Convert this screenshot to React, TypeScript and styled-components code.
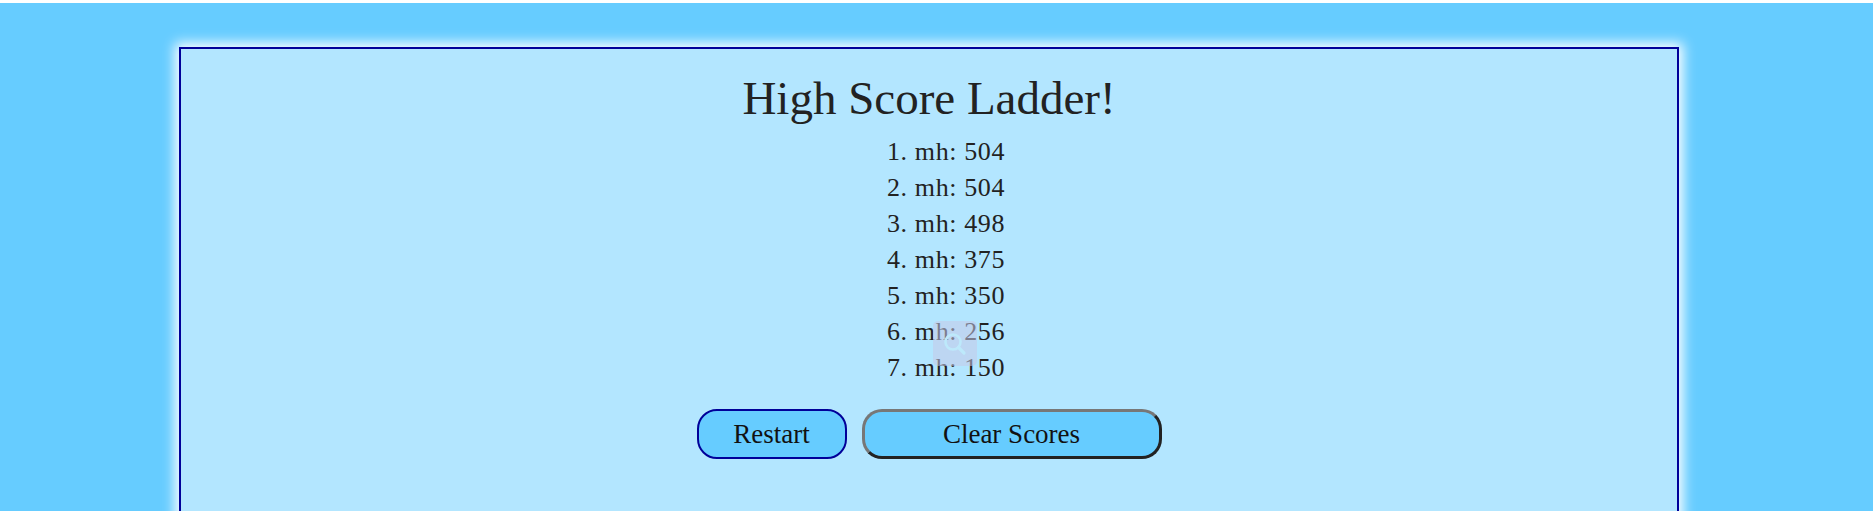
import React from "react";
import styled, { createGlobalStyle } from "styled-components";

const scores = [
  { name: "mh", score: 504 },
  { name: "mh", score: 504 },
  { name: "mh", score: 498 },
  { name: "mh", score: 375 },
  { name: "mh", score: 350 },
  { name: "mh", score: 256 },
  { name: "mh", score: 150 },
];

const App = () => {
  return (
    <>
      <GlobalStyle />
      <Page>
        <Panel>
          <Title>High Score Ladder!</Title>
          <Ladder>
            {scores.map((s, i) => (
              <Entry key={i}>
                {i + 1}. {s.name}: {s.score}
              </Entry>
            ))}
            <ZoomHint aria-hidden>
              <svg width="30" height="30" viewBox="0 0 30 30" fill="none">
                <circle cx="13" cy="13" r="7.5" stroke="#bde9fb" strokeWidth="2.6" />
                <path d="M18.5 18.5 L24 24" stroke="#bde9fb" strokeWidth="3.2" strokeLinecap="round" />
              </svg>
            </ZoomHint>
          </Ladder>
          <ButtonRow>
            <RestartButton type="button">Restart</RestartButton>
            <ClearButton type="button">Clear Scores</ClearButton>
          </ButtonRow>
        </Panel>
      </Page>
    </>
  );
};

// --- Styled Components ---

const GlobalStyle = createGlobalStyle`
  html, body {
    margin: 0;
    padding: 0;
    background: #ffffff;
  }
  body {
    padding-top: 3px;
    font-family: "Liberation Serif", "DejaVu Serif", serif;
    overflow: hidden;
  }
`;

const Page = styled.div`
  background-color: #66ccff;
  min-height: 508px;
  padding-top: 44px;
  box-sizing: border-box;
`;

const Panel = styled.div`
  box-sizing: border-box;
  width: 1500px;
  margin-left: 179px;
  min-height: 520px;
  background-color: #b3e6ff;
  border: 2px solid #000099;
  box-shadow: 0 0 12px 4px #ffffff;
  display: flex;
  flex-direction: column;
  align-items: center;
  padding-top: 21px;
`;

const Title = styled.h1`
  margin: 0;
  font-size: 47px;
  font-weight: 400;
  line-height: 56px;
  color: #222222;
`;

const Ladder = styled.ol`
  position: relative;
  list-style: none;
  margin: 8px 0 0;
  padding: 0 0 0 34px;
  display: flex;
  flex-direction: column;
  align-items: center;
`;

const Entry = styled.li`
  font-size: 26px;
  line-height: 36px;
  letter-spacing: 0.6px;
  color: #222222;
`;

const ZoomHint = styled.div`
  position: absolute;
  left: 80px;
  top: 187px;
  width: 44px;
  height: 45px;
  border-radius: 5px;
  background: rgba(196, 200, 232, 0.55);
  display: flex;
  align-items: center;
  justify-content: center;
`;

const ButtonRow = styled.div`
  display: flex;
  gap: 15px;
  margin-top: 23px;
`;

const ButtonBase = styled.button`
  box-sizing: border-box;
  height: 50px;
  background-color: #66ccff;
  color: #111111;
  font-family: "Liberation Serif", "DejaVu Serif", serif;
  font-size: 27px;
  border-radius: 20px;
  padding: 0;
  cursor: pointer;
`;

const RestartButton = styled(ButtonBase)`
  width: 150px;
  border: 2px solid #000099;
`;

const ClearButton = styled(ButtonBase)`
  width: 300px;
  border: 3px solid;
  border-color: #777777 #222222 #222222 #777777;
`;

export default App;
